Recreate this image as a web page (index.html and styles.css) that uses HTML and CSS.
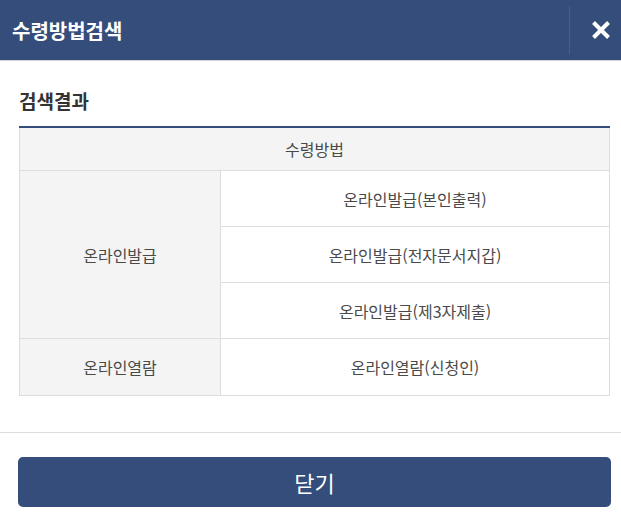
FILE: index.html
```html
<!DOCTYPE html>
<html lang="ko">
<head>
<meta charset="UTF-8" />
<meta name="viewport" content="width=device-width, initial-scale=1" />
<title>수령방법검색</title>
<link rel="stylesheet" href="styles.css">
</head>
<body>

<div class="popup">
  <div class="popup-head">
    <h1>수령방법검색</h1>
    <button class="close-btn" type="button" aria-label="닫기">
      <svg width="20" height="20" viewBox="0 0 20 20">
        <path d="M2.5 2.5 L17.5 17.5 M17.5 2.5 L2.5 17.5" stroke="#fff" stroke-width="4" fill="none" />
      </svg>
    </button>
  </div>

  <div class="popup-body">
    <h2>검색결과</h2>
    <table class="result-table">
      <thead>
        <tr>
          <th colspan="2">수령방법</th>
        </tr>
      </thead>
      <tbody>
        <tr>
          <td class="group" rowspan="3">온라인발급</td>
          <td>온라인발급(본인출력)</td>
        </tr>
        <tr>
          <td>온라인발급(전자문서지갑)</td>
        </tr>
        <tr>
          <td>온라인발급(제3자제출)</td>
        </tr>
        <tr class="last">
          <td class="group">온라인열람</td>
          <td>온라인열람(신청인)</td>
        </tr>
      </tbody>
    </table>
  </div>

  <div class="popup-foot">
    <button class="btn-close" type="button">닫기</button>
  </div>
</div>

</body>
</html>
```

FILE: styles.css
```css
body {
  margin: 0;
  font-family: "Noto Sans CJK KR", "Noto Sans", sans-serif;
  background: #fff;
}
.popup-head {
  display: flex;
  align-items: center;
  height: 60px;
  background: #344d7b;
  border-bottom: 1px solid #d4d4d4;
}
.popup-head h1 {
  flex: 1;
  margin: 0;
  padding-left: 12px;
  font-size: 20px;
  font-weight: 700;
  color: #fff;
}
.close-btn {
  display: flex;
  align-items: center;
  justify-content: center;
  width: 52px;
  height: 48px;
  padding: 0 0 0 10px;
  background: none;
  border: none;
  border-left: 1px solid #47608c;
  cursor: pointer;
}
.popup-body {
  padding: 27px 11px 36px 19px;
}
.popup-body h2 {
  margin: 0 0 12px;
  font-size: 19px;
  line-height: 26px;
  font-weight: 700;
  color: #333;
}
.result-table {
  width: 100%;
  border-collapse: collapse;
  border-top: 2px solid #344d7b;
  font-size: 16px;
  color: #4a4a4a;
}
.result-table th,
.result-table td {
  padding: 0;
  border: 1px solid #ddd;
  text-align: center;
  font-weight: 400;
}
.result-table th {
  height: 42px;
  background: #f4f4f4;
  border-top: none;
}
.result-table td {
  height: 55px;
}
.result-table .last td {
  height: 56px;
}
.result-table td.group {
  width: 200px;
  background: #f4f4f4;
}
.popup-foot {
  border-top: 1px solid #ddd;
  padding: 24px 10px 0 18px;
}
.btn-close {
  display: block;
  width: 100%;
  height: 50px;
  background: #344d7b;
  color: #fff;
  border: none;
  border-radius: 5px;
  font-family: inherit;
  font-size: 22px;
  cursor: pointer;
}
```
